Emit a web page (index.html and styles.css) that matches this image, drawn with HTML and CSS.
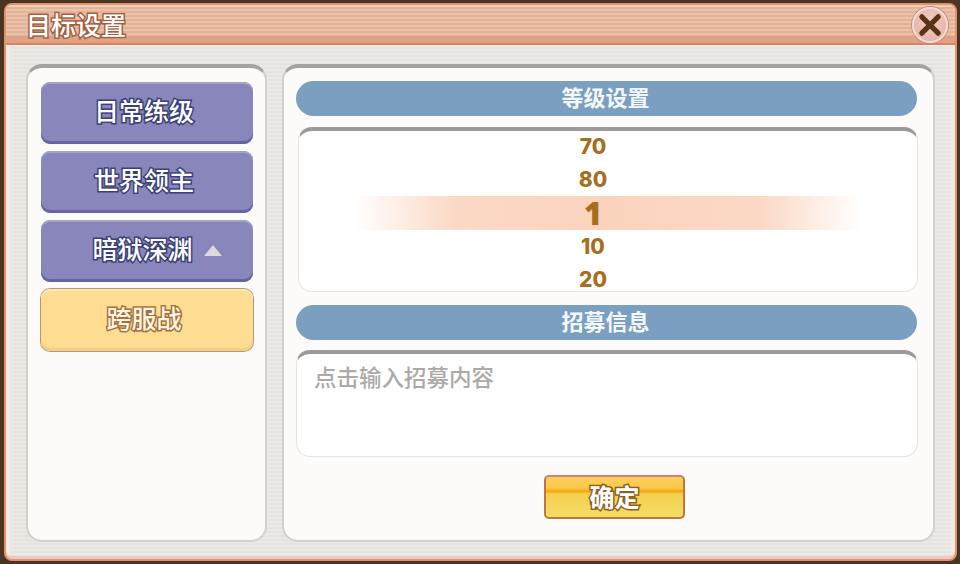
FILE: index.html
```html
<!DOCTYPE html>
<html lang="zh">
<head>
<meta charset="utf-8">
<title>目标设置</title>
<link rel="stylesheet" href="styles.css">
</head>
<body>
<div class="dialog">
  <header class="titlebar">
    <h1 class="title">目标设置</h1>
    <button class="close" aria-label="关闭">
      <svg viewBox="0 0 24 24" class="close-x"><path d="M5 5 L19 19 M19 5 L5 19"/></svg>
    </button>
  </header>
  <div class="content">
    <aside class="side">
      <button class="tab">日常练级</button>
      <button class="tab">世界领主</button>
      <button class="tab tab-open"><span>暗狱深渊</span><svg class="arrow" viewBox="0 0 20 13"><path d="M10 1 L19 12 H1 Z"/></svg></button>
      <button class="tab tab-active">跨服战</button>
    </aside>
    <main class="main">
      <div class="bar">等级设置</div>
      <div class="wheel">
        <div class="num">70</div>
        <div class="num">80</div>
        <div class="num num-current">1</div>
        <div class="num">10</div>
        <div class="num">20</div>
      </div>
      <div class="bar bar-second">招募信息</div>
      <div class="input">点击输入招募内容</div>
      <div class="actions"><button class="ok">确定</button></div>
    </main>
  </div>
</div>
</body>
</html>
```
FILE: styles.css
```css
* { box-sizing: border-box; }
html, body { margin: 0; height: 100%; }
body {
  width: 960px;
  height: 564px;
  overflow: hidden;
  padding: 3px 3px 3px 4px;
  background: #4b3522;
  font-family: "Noto Sans CJK SC", "Noto Sans", sans-serif;
}
button { font-family: inherit; padding: 0; cursor: pointer; }
.dialog {
  height: 558px;
  display: flex;
  flex-direction: column;
  border: 2px solid #df9470;
  border-radius: 8px;
  background: repeating-linear-gradient(180deg, #eceae7 0 2px, #e5e2df 2px 4px);
  box-shadow: inset 0 -3px 0 #efc9c6, inset 4px 0 0 #f3ece6, inset -4px 0 0 #f1ebe6;
  overflow: hidden;
}
.titlebar {
  height: 40px;
  flex: none;
  display: flex;
  align-items: center;
  justify-content: space-between;
  padding: 0 7px 0 20px;
  border-bottom: 2px solid #d9845c;
  background: repeating-linear-gradient(180deg, #ebc2aa 0 2px, #e4b299 2px 4px);
  box-shadow: inset 0 -7px 0 #e0a286, inset 0 2px 0 #f0cdb8;
}
.title {
  margin: 0 0 1px;
  font-size: 25px;
  line-height: 32px;
  font-weight: 500;
  color: #fff;
  -webkit-text-stroke: 3px #a3603f;
  paint-order: stroke fill;
}
.close {
  width: 36px;
  height: 36px;
  margin-top: 2px;
  display: flex;
  align-items: center;
  justify-content: center;
  border-radius: 50%;
  border: 2px solid #f3dcd5;
  background: radial-gradient(circle at 50% 40%, #f2cfc7, #e3a9a0);
  box-shadow: 0 0 0 1px #c58a80;
}
.close-x { width: 28px; height: 28px; }
.close-x path { fill: none; stroke: #5a3316; stroke-width: 4.4; stroke-linecap: round; }
.content {
  flex: 1;
  display: flex;
  gap: 15px;
  padding: 19px 20px 17px 20px;
}
.side {
  width: 241px;
  display: flex;
  flex-direction: column;
  gap: 7px;
  padding: 14px 12px 0 13px;
  background: #fcfbfa;
  border: 2px solid #d3d1ce;
  border-top: 4px solid #a5a3a0;
  border-radius: 16px;
}
.tab {
  height: 62px;
  flex: none;
  display: flex;
  align-items: center;
  justify-content: center;
  gap: 8px;
  border: 0;
  border-radius: 9px;
  padding: 0 6px 6px 0;
  background: #8886ba;
  box-shadow: inset 0 2px 0 #a3a2cb, inset 0 -3px 0 #6665a3;
  font-size: 25px;
  font-weight: 500;
  color: #fff;
  -webkit-text-stroke: 3px #3a3f78;
  paint-order: stroke fill;
}
.tab-open { padding: 0 0 6px 21px; }
.arrow { width: 20px; height: 13px; margin: 4px 0 0 2px; }
.arrow path { fill: #dcdada; stroke: #8c8aa8; stroke-width: 1; }
.tab-active {
  background: #fedd93;
  box-shadow: 0 0 0 1px #b7997a, inset 0 2px 0 #fbe7b6, inset 0 -3px 0 #f3cf86;
  color: #fff6e4;
  -webkit-text-stroke: 3px #a4713e;
}
.main {
  flex: 1;
  display: flex;
  flex-direction: column;
  padding: 13px 16px 0 12px;
  background: #fcfbfa;
  border: 2px solid #d3d1ce;
  border-top: 4px solid #a5a3a0;
  border-radius: 16px;
}
.bar {
  height: 35px;
  flex: none;
  display: flex;
  align-items: center;
  justify-content: center;
  padding: 0 2px 6px 0;
  border-radius: 18px;
  background: #7a9fc0;
  font-size: 22px;
  font-weight: 700;
  color: #f4f7fa;
}
.bar-second { margin-top: 13px; }
.wheel {
  height: 165px;
  flex: none;
  margin: 11px -1px 0 2px;
  display: flex;
  flex-direction: column;
  justify-content: center;
  background: #fff;
  border: 1px solid #e6e4e2;
  border-top: 4px solid #9c9a98;
  border-radius: 14px;
  padding-top: 4px;
}
.num {
  height: 33.4px;
  flex: none;
  display: flex;
  align-items: center;
  justify-content: center;
  padding-right: 30px;
  font-family: "Inter", "Liberation Sans", sans-serif;
  font-size: 21px;
  font-weight: 800;
  color: #a4701f;
}
.num-current {
  font-family: "Open Sans", sans-serif;
  font-size: 31px;
  background: linear-gradient(90deg, #fff0 9%, #fbd9c6 25%, #fbd3bd 50%, #fbd9c6 75%, #fff0 91%);
}
.input {
  height: 107px;
  flex: none;
  margin: 10px -1px 0 0;
  padding: 6px 17px;
  background: #fff;
  border: 1px solid #e6e4e2;
  border-top: 4px solid #9c9a98;
  border-radius: 14px;
  font-size: 22.5px;
  line-height: 32px;
  font-weight: 500;
  color: #acaaa8;
}
.actions {
  display: flex;
  padding-top: 18px;
  padding-left: 248px;
}
.ok {
  width: 141px;
  height: 44px;
  border: 2px solid #c1763d;
  border-top-color: #dd7d6a;
  border-radius: 5px;
  padding-bottom: 2px;
  background: linear-gradient(180deg, #fbd15c 0, #fbc74a 28%, #f4a60b 36%, #f4d04e 42%, #f5dc66 100%);
  font-size: 25px;
  font-weight: 700;
  color: #fff;
  -webkit-text-stroke: 3px #8e5f22;
  paint-order: stroke fill;
}
```
